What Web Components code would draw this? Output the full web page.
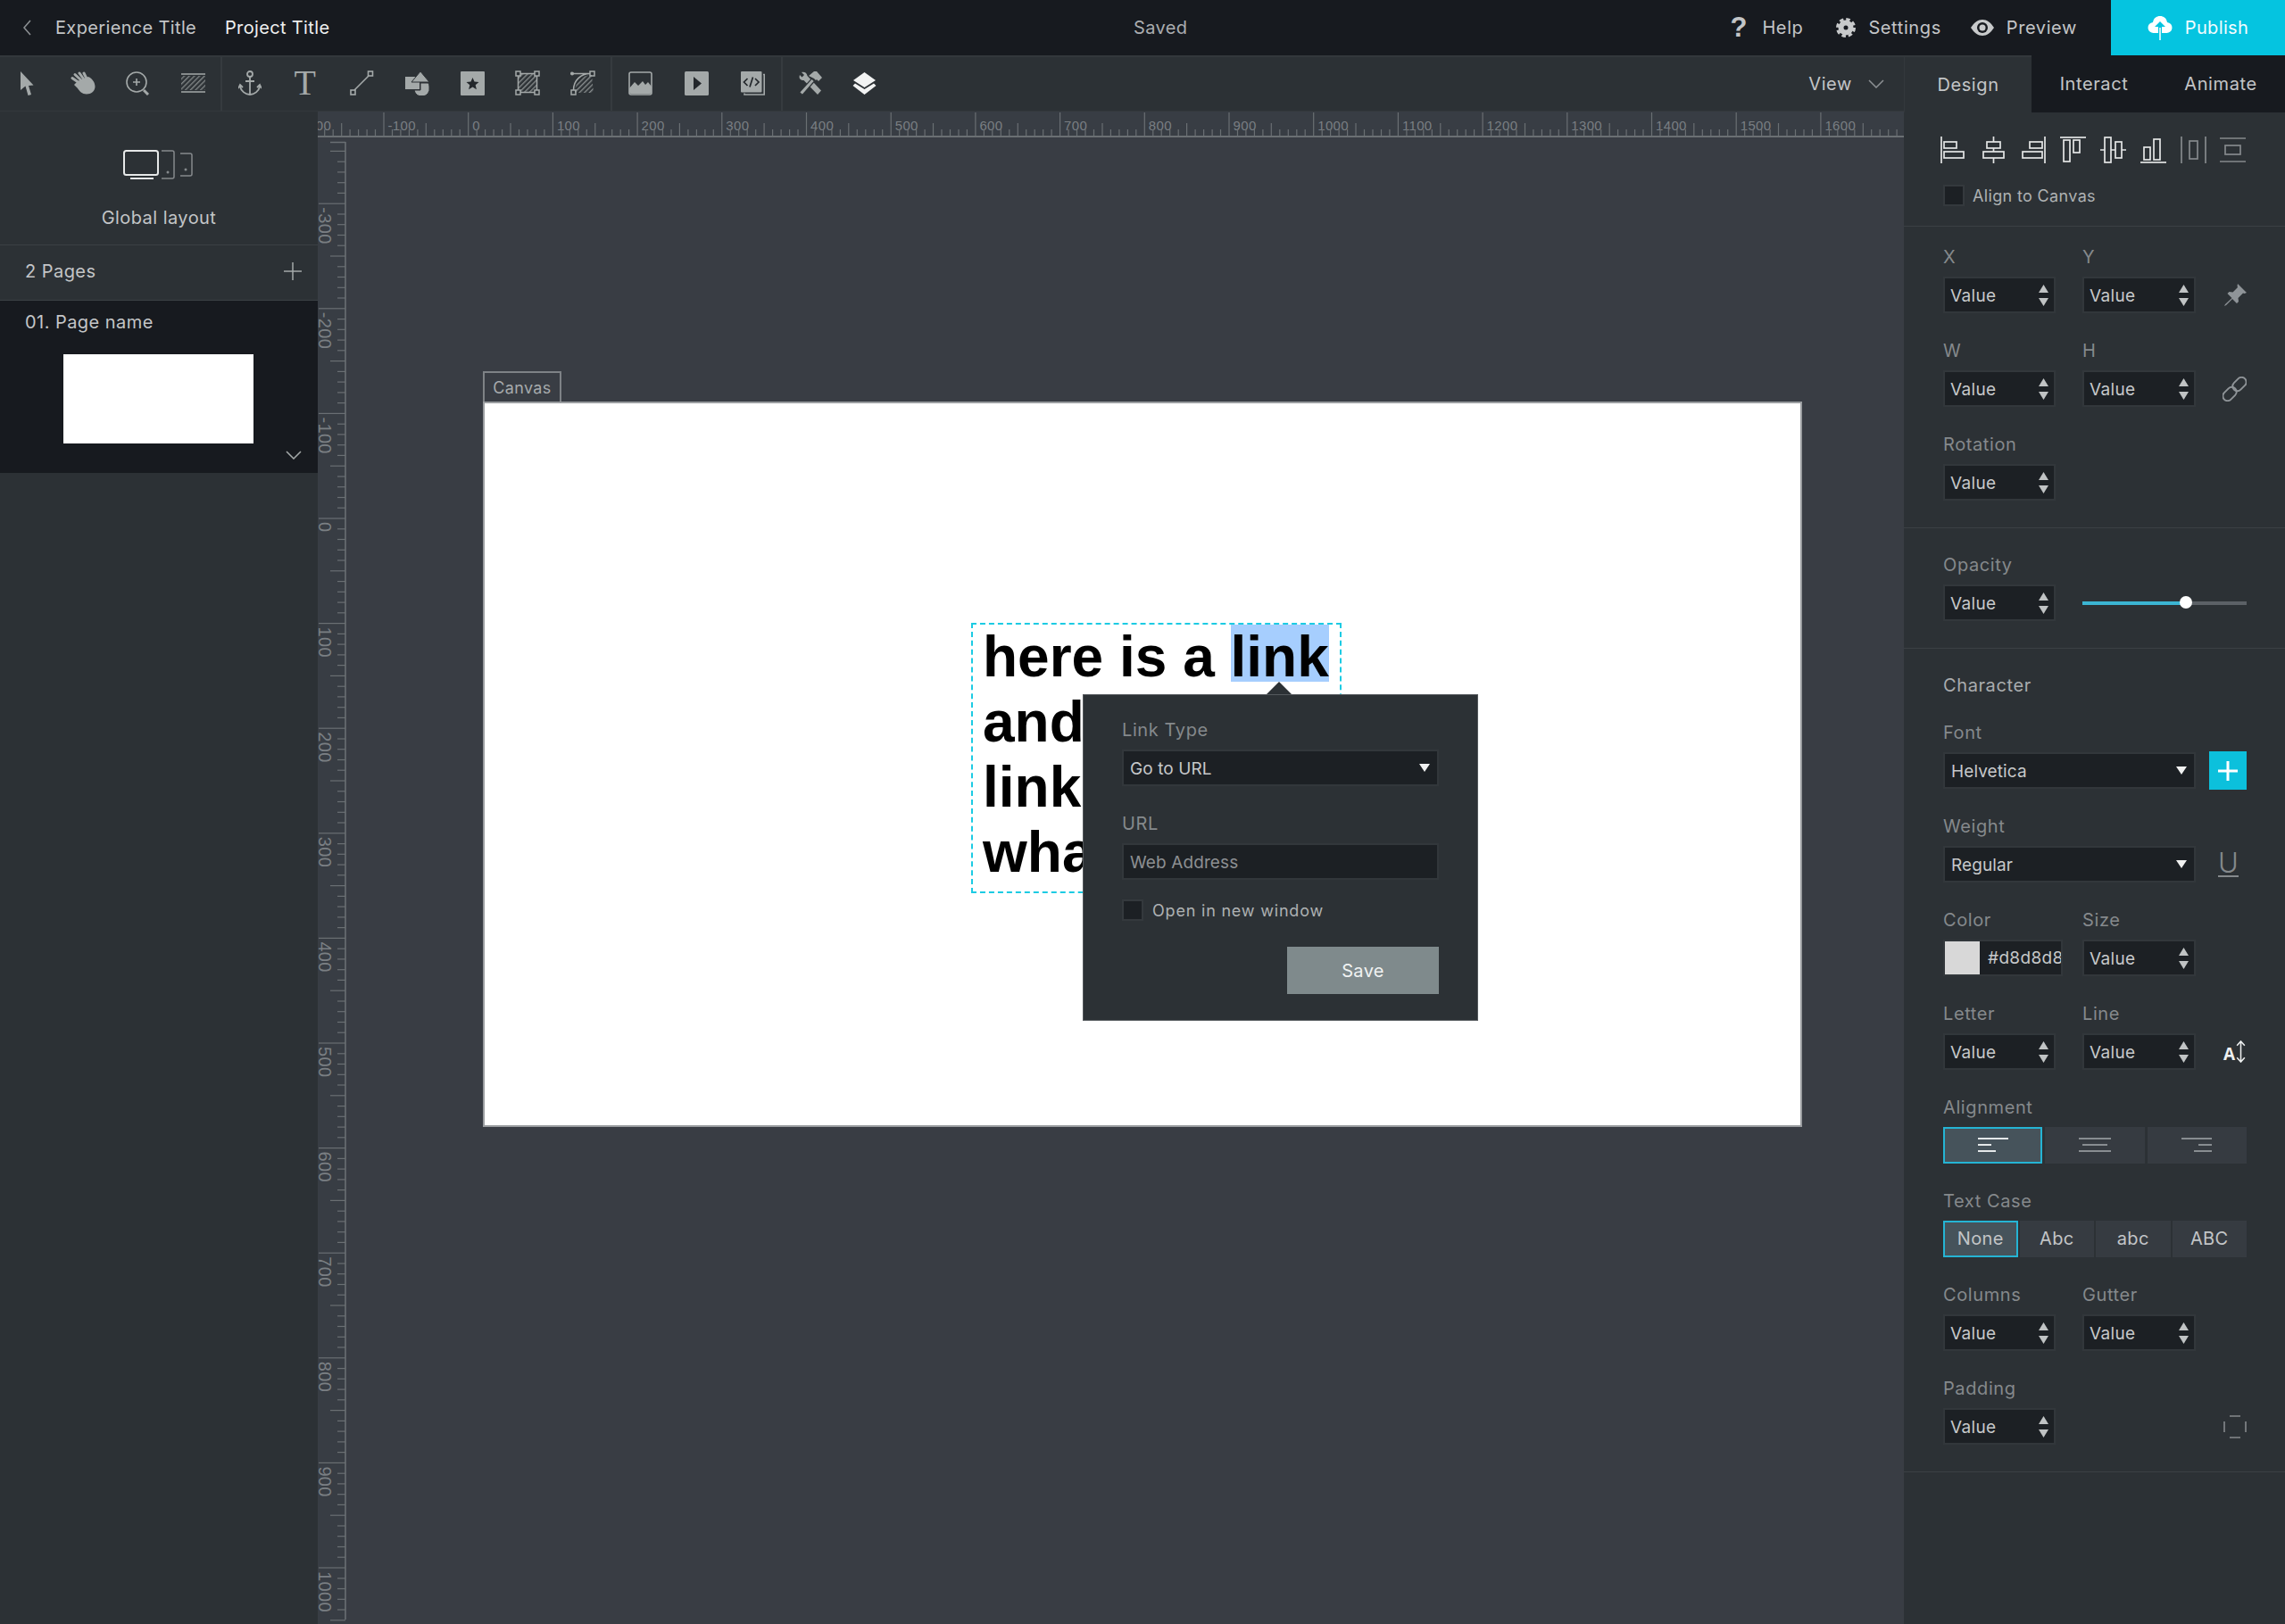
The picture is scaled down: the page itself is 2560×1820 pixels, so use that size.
<!DOCTYPE html>
<html>
<head>
<meta charset="utf-8">
<title>Editor</title>
<style>
	html, body { margin: 0; padding: 0; background: #393d44; }
	body { font-family: Inter, "Open Sans", sans-serif; font-size: 20px; letter-spacing: .35px; }
</style>
</head>
<body>
<app-shell>
	<top-bar slot="top"></top-bar>
	<tool-bar slot="tools"></tool-bar>
	<side-bar slot="side"></side-bar>
	<work-stage slot="stage">
		<canvas-sheet>
			<text-box></text-box>
			<link-popup></link-popup>
		</canvas-sheet>
	</work-stage>
	<prop-panel slot="props"></prop-panel>
</app-shell>

<script>
function tpl(html) {
	const t = document.createElement("template");
	t.innerHTML = html;
	return t;
}

class Base extends HTMLElement {
	constructor() {
		super();
		this.attachShadow({mode: "open"});
		this.shadowRoot.appendChild(this.constructor.template.content.cloneNode(true));
	}
}

const GREY = "#a4a9a9";

const hatch = `<defs><pattern id="hx" width="4" height="4" patternUnits="userSpaceOnUse" patternTransform="rotate(45)"><rect width="1.4" height="4" fill="${GREY}"/></pattern></defs>`;

const toolIcons = {
	arrow: `<svg width="15" height="27" viewBox="0 0 15 27"><path fill="${GREY}" d="M0 0 14.5 15.5 9 16 12 26 8.5 27 5.5 16.5 0 21Z"/></svg>`,
	hand: `<svg width="28" height="26" viewBox="0 0 28 26"><g stroke="${GREY}" stroke-width="3" stroke-linecap="round"><path d="M10 13 2 7.500"/><path d="M12 10 5 3.500"/><path d="M15 9 10 2"/><path d="M18 8 15 2"/></g><path fill="${GREY}" d="M8 11 20 6C24 8 27.500 12 27.500 17 27.500 22 23 25.500 18 25.500 13 25.500 10 22 8 19L4 15Z"/></svg>`,
	zoom: `<svg width="27" height="27" viewBox="0 0 27 27" fill="none" stroke="${GREY}"><circle cx="12" cy="12" r="11" stroke-width="1.6"/><path d="M12 8v8M8 12h8" stroke-width="1.6"/><path d="M20 21l5 5" stroke-width="3"/></svg>`,
	hatchbar: `<svg width="27" height="22" viewBox="0 0 27 22">${hatch}<rect y="3" width="27" height="16" fill="url(#hx)" opacity=".7"/><path d="M0 1h27M0 21h27" stroke="${GREY}" stroke-width="1.6"/></svg>`,
	anchor: `<svg width="26" height="28" viewBox="0 0 26 28" fill="none" stroke="${GREY}" stroke-width="1.8"><circle cx="13" cy="4" r="3"/><path d="M13 7v20M8 12h10"/><path d="M2 18c1 5 6 9 11 9s10-4 11-9"/><path d="M0 20l2-4 3 3M26 20l-2-4-3 3"/></svg>`,
	line: `<svg width="27" height="28" viewBox="0 0 27 28" fill="none" stroke="${GREY}" stroke-width="1.6"><rect x="20.5" y="1" width="5" height="5"/><rect x="1" y="22" width="5" height="5"/><path d="M5 22 21 6"/></svg>`,
	shapes: `<svg width="27" height="27" viewBox="0 0 27 27" fill="${GREY}"><rect y="6" width="16" height="14"/><path d="M17 0 27 12H7Z" stroke="#2c3135" stroke-width="1"/><path d="M10 21h7v-8h9c1 2 1 4 1 5a8.500 8.500 0 0 1-17 3Z" stroke="#2c3135" stroke-width="1"/></svg>`,
	star: `<svg width="27" height="27" viewBox="0 0 27 27"><rect width="27" height="27" rx="1" fill="${GREY}"/><path fill="#23272b" d="M13.500 7l2 4.600 5 .4-3.800 3.300 1.200 4.900-4.400-2.600-4.400 2.600 1.200-4.900L6.500 12l5-.4Z"/></svg>`,
	frame: `<svg width="28" height="28" viewBox="0 0 28 28">${hatch}<rect x="4" y="4" width="20" height="20" fill="url(#hx)" opacity=".75"/><g fill="#2c3135" stroke="${GREY}" stroke-width="1.5"><path d="M3.500 3.500h21v21h-21Z" fill="none"/><rect x="1" y="1" width="5" height="5"/><rect x="22" y="1" width="5" height="5"/><rect x="1" y="22" width="5" height="5"/><rect x="22" y="22" width="5" height="5"/></g></svg>`,
	curve: `<svg width="28" height="28" viewBox="0 0 28 28">${hatch}<path d="M5 24C5 13 13 5 24 5L26 25H5Z" fill="url(#hx)" opacity=".75"/><g fill="none" stroke="${GREY}" stroke-width="1.5"><path d="M3.500 22C3.500 11 12 3.500 22 3.500H3"/><rect x="1" y="22" width="5" height="5"/><rect x="22" y="1" width="5" height="5"/><circle cx="2" cy="3.500" r="1.300" fill="${GREY}"/></g></svg>`,
	image: `<svg width="27" height="27" viewBox="0 0 27 27"><rect x="1" y="1" width="25" height="25" rx="2" fill="none" stroke="${GREY}" stroke-width="1.6"/><path fill="${GREY}" d="M1 19 7 12l4 4 5-5 3 4 3-3 4 5v6a2 2 0 0 1-2 2H3a2 2 0 0 1-2-2Z"/></svg>`,
	play: `<svg width="27" height="27" viewBox="0 0 27 27"><rect width="27" height="27" rx="1.500" fill="${GREY}"/><path fill="#23272b" d="M10 6 19 13.500 10 21Z"/></svg>`,
	code: `<svg width="27" height="27" viewBox="0 0 27 27"><path d="M25 3.500h1.200V26H4v-1.500" fill="none" stroke="${GREY}" stroke-width="1.600"/><rect width="23.500" height="23.500" rx="1" fill="${GREY}"/><path d="M7.500 8 3.500 12l4 4M16 8l4 4-4 4M13.500 6.500 10 17.500" fill="none" stroke="#23272b" stroke-width="1.700"/></svg>`,
	tools: `<svg width="28" height="27" viewBox="0 0 28 27" fill="${GREY}"><path d="M2 4 4.500 6.500 7 4 4 1C7 0 10 1.500 10.500 5L26 21.500 22 26 6.500 10C3 10 .5 8 2 4Z"/><path d="M15.500 8 18.500 11 5 26.500 1.500 23.500Z" stroke="#2c3135" stroke-width="1.200"/><path d="M12 5 18 0h3l6 7-4 4-2-2-1 1-2-2Z"/></svg>`,
	layers: `<svg width="27" height="25" viewBox="0 0 27 25" fill="#f2f3f3"><path d="M13.500 0 26 9 13.500 17 1 9Z"/><path d="M3 12.500 13.500 19 24 12.500 26.500 15 13.500 25 .5 15Z"/></svg>`
};

class AppShell extends Base {
	static template = tpl(`
		<style>
			:host { display: grid; grid-template-columns: 2133px 427px; grid-template-rows: 62px 1fr; width: 2560px; height: 1820px; overflow: hidden; }
			#top { grid-column: 1 / 3; }
			#main { display: flex; flex-direction: column; min-width: 0; }
			#work { flex: 1; display: flex; min-height: 0; }
		</style>
		<div id="top"><slot name="top"></slot></div>
		<div id="main">
			<slot name="tools"></slot>
			<div id="work"><slot name="side"></slot><slot name="stage"></slot></div>
		</div>
		<slot name="props"></slot>
	`);
}

class TopBar extends Base {
	static template = tpl(`
		<style>
			:host { display: flex; align-items: center; height: 62px; background: #171a1f; color: #c3c5c7; position: relative; }
			.chev { margin-left: 24px; width: 24px; }
			.t1 { margin-left: 14px; width: 190px; }
			.t2 { color: #eeefef; }
			.saved { position: absolute; left: 1270px; color: #aaadaf; }
			.right { margin-left: auto; display: flex; align-items: center; height: 100%; }
			.act { display: flex; align-items: center; letter-spacing: .6px; }
			.pub { width: 195px; height: 100%; margin-left: 38px; background: #05c4e0; color: #f2fcfe; display: flex; align-items: center; justify-content: center; gap: 14px; }
			.q { font: 700 31px "Liberation Sans", sans-serif; width: 17px; color: #c3c5c7; }
		</style>
		<svg class="chev" width="10" height="20" viewBox="0 0 24 20" fill="none" stroke="#8d9194" stroke-width="1.500"><path d="M10 2 3 10l7 8"/></svg>
		<span class="t1">Experience Title</span>
		<span class="t2">Project Title</span>
		<span class="saved">Saved</span>
		<div class="right">
			<div class="act"><span class="q">?</span><span style="margin-left:19px">Help</span></div>
			<div class="act" style="margin-left:37px">
				<svg width="22" height="24" viewBox="0 0 22 24"><g transform="translate(11 12)"><circle r="5.500" fill="none" stroke="#c8cacb" stroke-width="6"/><circle r="9.500" fill="none" stroke="#c8cacb" stroke-width="3" stroke-dasharray="4.500 2.960"/></g></svg>
				<span style="margin-left:14px">Settings</span>
			</div>
			<div class="act" style="margin-left:33px">
				<svg width="26" height="18" viewBox="0 0 26 18"><path fill="#c8cacb" d="M0 9C4 3 8 0 13 0s9 3 13 9c-4 6-8 9-13 9S4 15 0 9Z"/><circle cx="13" cy="9" r="6" fill="#171a1f"/><circle cx="13" cy="9" r="3.500" fill="#c8cacb"/></svg>
				<span style="margin-left:14px">Preview</span>
			</div>
			<div class="pub">
				<svg width="28" height="27" viewBox="0 0 28 27"><path fill="#fff" d="M7 19a6 6 0 0 1-1-12C7 2 10 0 14 0s7 2 8 7a6 6 0 0 1-1 12Z"/><path fill="#05c4e0" d="M14 6l6 6h-4v7h-4v-7H8Z"/><path d="M14 13v14" stroke="#fff" stroke-width="1.500"/></svg>
				<span>Publish</span>
			</div>
		</div>
	`);
}

class ToolBar extends Base {
	static template = tpl(`
		<style>
			:host { display: flex; align-items: stretch; height: 63px; box-sizing: border-box; background: #2c3135; border-top: 2px solid #33383c; border-bottom: 1px solid #33383c; color: #c3c5c7; }
			.grp { display: flex; border-right: 2px solid #363b3f; box-sizing: border-box; }
			.ic { display: flex; align-items: center; justify-content: center; flex: 1; padding-bottom: 2px; }
			.T { font: 40px/1 "Liberation Serif", serif; color: ${GREY}; letter-spacing: 0; padding-right: 2px; }
			.view { margin-left: auto; display: flex; align-items: center; padding-right: 22px; gap: 18px; letter-spacing: .6px; }
		</style>
		<div class="grp" style="width:249px"><span class="ic">${toolIcons.arrow}</span><span class="ic">${toolIcons.hand}</span><span class="ic">${toolIcons.zoom}</span><span class="ic">${toolIcons.hatchbar}</span></div>
		<div class="grp" style="width:437px"><span class="ic">${toolIcons.anchor}</span><span class="ic T">T</span><span class="ic">${toolIcons.line}</span><span class="ic">${toolIcons.shapes}</span><span class="ic">${toolIcons.star}</span><span class="ic">${toolIcons.frame}</span><span class="ic">${toolIcons.curve}</span></div>
		<div class="grp" style="width:191px"><span class="ic">${toolIcons.image}</span><span class="ic">${toolIcons.play}</span><span class="ic">${toolIcons.code}</span></div>
		<div style="width:122px;display:flex"><span class="ic">${toolIcons.tools}</span><span class="ic">${toolIcons.layers}</span></div>
		<div class="view"><span>View</span><svg width="18" height="10" viewBox="0 0 18 10" fill="none" stroke="#8d9194" stroke-width="1.500"><path d="M1 1l8 8 8-8"/></svg></div>
	`);
}

class SideBar extends Base {
	static template = tpl(`
		<style>
			:host { display: block; width: 356px; flex: none; background: #2c3135; color: #c3c5c7; letter-spacing: .45px; position: relative; z-index: 1; }
			.global { height: 150px; box-sizing: border-box; border-bottom: 1px solid #3b4044; display: flex; flex-direction: column; align-items: center; padding-top: 43px; }
			.global span { margin-top: 30px; line-height: 24px; }
			.pages { height: 62px; box-sizing: border-box; border-bottom: 1px solid #3b4044; display: flex; align-items: center; justify-content: space-between; padding: 0 18px 3px 28px; }
			.page { height: 193px; background: #171a1f; position: relative; padding: 12px 0 0 28px; box-sizing: border-box; }
			.page .thumb { width: 213px; height: 100px; background: #fff; margin: 24px 0 0 43px; }
			.page svg { position: absolute; right: 18px; top: 168px; }
		</style>
		<div class="global">
			<svg width="80" height="34" viewBox="0 0 80 34" fill="none">
				<rect x="1" y="1" width="38" height="27" rx="2.500" stroke="#e6e8e8" stroke-width="2"/>
				<path d="M8 32h26" stroke="#e6e8e8" stroke-width="2"/>
				<path d="M43 1h12a2 2 0 0 1 2 2v27a2 2 0 0 1-2 2H43" stroke="#85898c" stroke-width="1.500"/>
				<circle cx="50" cy="25" r="1.500" fill="#85898c"/>
				<path d="M64 4h11a2 2 0 0 1 2 2v21a2 2 0 0 1-2 2H64" stroke="#85898c" stroke-width="1.500"/>
				<circle cx="70" cy="22" r="1.500" fill="#85898c"/>
			</svg>
			<span>Global layout</span>
		</div>
		<div class="pages"><span>2 Pages</span><svg width="20" height="20" viewBox="0 0 20 20" stroke="#a4a9a9" stroke-width="1.500"><path d="M10 0v20M0 10h20"/></svg></div>
		<div class="page">
			<span>01. Page name</span>
			<div class="thumb"></div>
			<svg width="18" height="10" viewBox="0 0 18 10" fill="none" stroke="#a4a9a9" stroke-width="1.500"><path d="M1 1l8 8 8-8"/></svg>
		</div>
	`);
}

class HRuler extends Base {
	static template = tpl(`
		<style>
			:host { display: block; height: 29px; background: #383d44; overflow: hidden; }
			svg { display: block; }
		</style>
		<svg width="1777" height="29"></svg>
	`);
	connectedCallback() {
		const origin = 168.7, step = 0.947;
		let s = `<path d="M0 28H1777" stroke="#6a6f73" stroke-width="2"/>`;
		for (let v = -200; v <= 1690; v += 10) {
			const x = (origin + v * step).toFixed(1);
			if (v % 100 === 0) {
				s += `<path d="M${x} 1V28" stroke="#6a6f73" stroke-width="1.200"/><text x="${+x + 4.5}" y="21" font-family="Liberation Sans" font-size="15" fill="#7a7f83">${v}</text>`;
			} else {
				const h = v % 50 === 0 ? 14 : 7;
				s += `<path d="M${x} ${27 - h}V27" stroke="#6a6f73" stroke-width="1.200"/>`;
			}
		}
		this.shadowRoot.querySelector("svg").innerHTML = s;
	}
}

class VRuler extends Base {
	static template = tpl(`
		<style>
			:host { display: block; width: 32px; height: 100%; background: #383d44; margin-top: 5px; }
			svg { display: block; overflow: visible; }
		</style>
		<svg width="32" height="1656"></svg>
	`);
	connectedCallback() {
		const origin = 422, step = 1.176;
		let s = `<path d="M31 0V1656M14 .5H31" stroke="#6a6f73" stroke-width="1.600"/>`;
		for (let v = -350; v <= 1050; v += 10) {
			const y = (origin + v * step).toFixed(1);
			if (y < 6) continue;
			if (v % 100 === 0) {
				s += `<path d="M1 ${y}H31" stroke="#6a6f73" stroke-width="1.200"/><text transform="translate(1 ${+y + 4}) rotate(90)" font-family="Liberation Sans" font-size="20" fill="#7a7f83">${v}</text>`;
			} else {
				const w = v % 50 === 0 ? 17 : 9;
				s += `<path d="M${31 - w} ${y}H31" stroke="#6a6f73" stroke-width="1.200"/>`;
			}
		}
		this.shadowRoot.querySelector("svg").innerHTML = s;
	}
}

class WorkStage extends Base {
	static template = tpl(`
		<style>
			:host { display: flex; flex-direction: column; flex: 1; min-width: 0; background: #393d44; position: relative; }
			#body { flex: 1; min-height: 0; }
		</style>
		<h-ruler></h-ruler>
		<div id="body"><v-ruler></v-ruler></div>
		<slot></slot>
	`);
}

class CanvasSheet extends Base {
	static template = tpl(`
		<style>
			:host { position: absolute; left: 185px; top: 325px; width: 1478px; height: 813px; box-sizing: border-box; background: #fff; border: 2px solid #9a9da0; display: block; }
			.tab { position: absolute; left: -2px; top: -36px; width: 88px; height: 34px; box-sizing: border-box; border: 2px solid #7e8286; border-bottom: 0; color: #a6aaac; font-size: 18px; display: flex; align-items: center; justify-content: center; }
		</style>
		<div class="tab">Canvas</div>
		<slot></slot>
	`);
}

class TextBox extends Base {
	static template = tpl(`
		<style>
			:host { position: absolute; left: 545px; top: 246px; width: 415px; height: 303px; box-sizing: border-box; border: 2px dashed #1ccbe3; padding-left: 11px; font: 700 64px/73px "Liberation Sans", sans-serif; letter-spacing: 0; color: #000; white-space: nowrap; }
			mark { color: inherit; background: linear-gradient(#a6cefe, #a6cefe) no-repeat 0 0 / 100% 64px; }
		</style>
		here is a <mark>link</mark><br>and<br>link<br>what
	`);
}

class SelField extends Base {
	static template = tpl(`
		<style>
			:host { display: flex; align-items: center; height: 41px; box-sizing: border-box; background: #1c2024; border: 2px solid #32373b; color: #c6c8ca; padding: 2px 8px 0 7px; font-size: 19px; letter-spacing: .1px; }
			svg { margin-left: auto; margin-top: -2px; }
		</style>
		<slot></slot>
		<svg width="12" height="9" viewBox="0 0 12 9"><path fill="#f0f1f1" d="M0 0h12L6 9Z"/></svg>
	`);
}

class NumField extends Base {
	static template = tpl(`
		<style>
			:host { display: flex; align-items: center; height: 41px; box-sizing: border-box; background: #1c2024; border: 2px solid #32373b; color: #c6c8ca; padding: 2px 6px 0 6px; font-size: 19px; letter-spacing: .35px; }
			svg { margin-left: auto; margin-top: -2px; }
		</style>
		<slot>Value</slot>
		<svg width="11" height="24" viewBox="0 0 11 24" fill="#c0c3c4"><path d="M5.500 0 11 9H0Z"/><path d="M0 15h11L5.500 24Z"/></svg>
	`);
}

class FieldLabel extends Base {
	static template = tpl(`
		<style>
			:host { display: block; height: 22px; line-height: 22px; color: #85898c; white-space: nowrap; letter-spacing: .6px; }
		</style>
		<slot></slot>
	`);
}

class CheckItem extends Base {
	static template = tpl(`
		<style>
			:host { display: flex; align-items: center; gap: 10px; color: #aeb1b3; font-size: 18px; height: 24px; }
			i { width: 24px; height: 24px; box-sizing: border-box; background: #1c2024; border: 2px solid #34393d; display: block; }
		</style>
		<i></i><slot></slot>
	`);
}

class LinkPopup extends Base {
	static template = tpl(`
		<style>
			:host { position: absolute; left: 670px; top: 326px; width: 443px; height: 366px; box-sizing: border-box; background: #2c3135; border: 1px solid #55595d; padding: 28px 43px 0 43px; display: block; }
			.tip { position: absolute; left: 205px; top: -15px; width: 28px; height: 14px; background: #2c3135; clip-path: polygon(50% 0, 100% 100%, 0 100%); }
			field-label { margin-bottom: 11px; }
			sel-field { margin-bottom: 31px; }
			check-item { margin-top: 22px; letter-spacing: .8px; }
			.save { width: 170px; height: 53px; margin: 29px 0 0 auto; background: #7f8a8c; color: #f0f2f2; display: flex; align-items: center; justify-content: center; }
			.url { height: 41px; box-sizing: border-box; background: #1c2024; border: 2px solid #32373b; color: #8c8f92; padding: 2px 0 0 7px; display: flex; align-items: center; font-size: 19px; letter-spacing: .1px; }
		</style>
		<div class="tip"></div>
		<field-label>Link Type</field-label>
		<sel-field>Go to URL</sel-field>
		<field-label>URL</field-label>
		<div class="url">Web Address</div>
		<check-item>Open in new window</check-item>
		<div class="save">Save</div>
	`);
}

class SegGroup extends Base {
	static template = tpl(`
		<style>
			:host { display: grid; grid-auto-flow: column; grid-auto-columns: 1fr; height: 41px; gap: var(--gap, 3px); }
			::slotted(*) { box-sizing: border-box; background: #363b41; color: #c3c5c7; display: flex; align-items: center; justify-content: center; padding-bottom: 2px; }
			::slotted(.on) { background: #46535b; border: 2px solid #25b4d4; }
		</style>
		<slot></slot>
	`);
}

class PropPanel extends Base {
	static template = tpl(`
		<style>
			:host { display: block; background: #2c3135; color: #c3c5c7; }
			.tabs { display: flex; height: 64px; background: #171a1f; box-sizing: border-box; }
			.tabs span { display: flex; align-items: center; justify-content: center; height: 100%; letter-spacing: .6px; }
			.tabs .on { width: 143px; background: #2c3135; border-left: 1px solid #33383c; box-sizing: border-box; border-top: 2px solid #33383c; }
			.aligns { display: flex; padding: 27px 0 0 33px; height: 30px; color: #e4e6e6; }
			.aligns span { width: 44.800px; display: flex; justify-content: center; }
			.aligns svg { fill: none; stroke: currentColor; stroke-width: 1.700; }
			.aligns .dim { color: #85898c; }
			.sec { border-bottom: 1px solid #3b4044; padding: 30px 0 30px 44px; }
			.sec.first { padding: 0 0 22px 44px; margin-top: 24px; }
			.sec.first check-item { gap: 9px; }
			.sec.top { padding-top: 23px; }
			.row { display: grid; grid-template-columns: 126px 127px 27px; column-gap: 30px; margin-bottom: 31px; align-items: end; }
			.row:last-child { margin-bottom: 0; }
			.f { display: flex; flex-direction: column; gap: 11px; }
			.wide { grid-column: 1 / 3; }
			.all { grid-column: 1 / 4; }
			.ic { height: 41px; display: flex; align-items: center; justify-content: center; }
			.plus { width: 42px; height: 43px; background: #0cc0dc; margin-left: -15px; margin-bottom: -1px; display: flex; align-items: center; justify-content: center; }
			.u { font-weight: 300; font-size: 31px; line-height: 26px; color: #85898c; border-bottom: 2px solid #85898c; letter-spacing: 0; height: 27px; font-family: Inter, sans-serif; margin-right: 14px; }
			.a { display: flex; align-items: flex-end; gap: 1px; color: #eef0f0; font: 700 19px/1 "Open Sans", sans-serif; letter-spacing: 0; box-sizing: border-box; padding-bottom: 8px; }
			.color { display: flex; width: 134px; height: 41px; box-sizing: border-box; background: #1c2024; border: 2px solid #32373b; color: #c6c8ca; overflow: hidden; align-items: center; font-size: 19px; }
			.color i { width: 39px; height: 100%; background: #d8d8d8; flex: none; margin-right: 9px; }
			.title { color: #a9acae; }
			.slider { grid-column: 2 / 4; height: 41px; display: flex; align-items: center; position: relative; }
			.slider b { height: 4px; display: block; width: 116px; background: #3bb5d3; }
			.slider em { height: 4px; display: block; flex: 1; background: #5c6166; }
			.slider u { position: absolute; left: 109px; top: 13px; width: 14px; height: 14px; border-radius: 50%; background: #fff; }
			.lines { display: block; }
		</style>
		<div class="tabs">
			<span class="on">Design</span>
			<span style="width:140px">Interact</span>
			<span style="width:144px">Animate</span>
		</div>
		<div class="aligns">
			<span><svg width="29" height="30" viewBox="0 0 29 30"><path d="M1 0v30"/><rect x="4" y="6" width="14" height="7"/><rect x="4" y="17" width="22" height="7"/></svg></span>
			<span><svg width="29" height="30" viewBox="0 0 29 30"><path d="M14.500 0v6M14.500 13v4M14.500 24v6"/><rect x="7" y="6" width="15" height="7"/><rect x="3" y="17" width="23" height="7"/></svg></span>
			<span><svg width="29" height="30" viewBox="0 0 29 30"><path d="M28 0v30"/><rect x="11" y="6" width="14" height="7"/><rect x="3" y="17" width="22" height="7"/></svg></span>
			<span><svg width="29" height="30" viewBox="0 0 29 30"><path d="M0 1h29"/><rect x="4" y="4" width="7" height="24"/><rect x="15" y="4" width="7" height="14"/></svg></span>
			<span><svg width="29" height="30" viewBox="0 0 29 30"><path d="M0 15h5M12 15h5M24 15h5"/><rect x="5" y="1" width="7" height="28"/><rect x="17" y="6" width="7" height="18"/></svg></span>
			<span><svg width="29" height="30" viewBox="0 0 29 30"><path d="M0 29h29"/><rect x="4" y="12" width="7" height="14"/><rect x="15" y="3" width="7" height="23"/></svg></span>
			<span class="dim"><svg width="29" height="30" viewBox="0 0 29 30"><path d="M1 0v30M28 0v30"/><rect x="10" y="5" width="9" height="20"/></svg></span>
			<span class="dim"><svg width="29" height="30" viewBox="0 0 29 30"><path d="M0 2h29M0 28h29"/><rect x="6" y="10" width="17" height="10"/></svg></span>
		</div>
		<div class="sec first"><check-item>Align to Canvas</check-item></div>

		<div class="sec top">
			<div class="row">
				<div class="f"><field-label>X</field-label><num-field></num-field></div>
				<div class="f"><field-label>Y</field-label><num-field></num-field></div>
				<div class="ic"><svg width="26" height="26" viewBox="0 0 26 26"><path fill="#8f9498" d="M16 0l10 10-2.500 1-1.500-.5-5.500 5.500.5 4-2 2-5-5L3 24l-2 1 1-2 7.500-7-5-5 2-2 4 .5L16 4l-.5-1.500Z"/></svg></div>
			</div>
			<div class="row">
				<div class="f"><field-label>W</field-label><num-field></num-field></div>
				<div class="f"><field-label>H</field-label><num-field></num-field></div>
				<div class="ic"><svg width="28" height="28" viewBox="0 0 28 28" fill="none" stroke="#8f9498" stroke-width="2"><g transform="rotate(-45 14 14)"><rect x="-3" y="8.500" width="18" height="11" rx="5.500"/><rect x="13" y="8.500" width="18" height="11" rx="5.500"/></g></svg></div>
			</div>
			<div class="row">
				<div class="f"><field-label>Rotation</field-label><num-field></num-field></div>
			</div>
		</div>

		<div class="sec">
			<div class="row">
				<div class="f"><field-label>Opacity</field-label><num-field></num-field></div>
				<div class="slider"><b></b><em></em><u></u></div>
			</div>
		</div>

		<div class="sec">
			<div class="row"><field-label class="all title">Character</field-label></div>
			<div class="row">
				<div class="f wide"><field-label>Font</field-label><sel-field>Helvetica</sel-field></div>
				<div class="plus"><svg width="22" height="22" viewBox="0 0 22 22" stroke="#fff" stroke-width="3"><path d="M11 0v22M0 11h22"/></svg></div>
			</div>
			<div class="row">
				<div class="f wide"><field-label>Weight</field-label><sel-field>Regular</sel-field></div>
				<div class="ic"><span class="u">U</span></div>
			</div>
			<div class="row">
				<div class="f"><field-label>Color</field-label><div class="color"><i></i><span>#d8d8d8</span></div></div>
				<div class="f"><field-label>Size</field-label><num-field></num-field></div>
			</div>
			<div class="row">
				<div class="f"><field-label>Letter</field-label><num-field></num-field></div>
				<div class="f"><field-label>Line</field-label><num-field></num-field></div>
				<div class="ic a"><span>A</span><svg width="11" height="25" viewBox="0 0 11 26" fill="none" stroke="#eef0f0" stroke-width="1.600"><path d="M5.500 1v24M1 6l4.500-5L10 6M1 20l4.500 5L10 20"/></svg></div>
			</div>
			<div class="row">
				<div class="f all"><field-label>Alignment</field-label>
					<seg-group>
						<div class="on"><svg class="lines" width="34" height="18" viewBox="0 0 34 18" stroke="#e4e8e9" stroke-width="2"><path d="M0 2h34M0 9h15M0 16h20"/></svg></div>
						<div><svg class="lines" width="36" height="18" viewBox="0 0 36 18" stroke="#888d91" stroke-width="2"><path d="M0 2h36M4 9h28M0 16h36"/></svg></div>
						<div><svg class="lines" width="34" height="18" viewBox="0 0 34 18" stroke="#888d91" stroke-width="2"><path d="M0 2h34M19 9h15M14 16h20"/></svg></div>
					</seg-group>
				</div>
			</div>
			<div class="row">
				<div class="f all"><field-label>Text Case</field-label>
					<seg-group style="--gap:2px">
						<div class="on">None</div>
						<div>Abc</div>
						<div>abc</div>
						<div>ABC</div>
					</seg-group>
				</div>
			</div>
			<div class="row">
				<div class="f"><field-label>Columns</field-label><num-field></num-field></div>
				<div class="f"><field-label>Gutter</field-label><num-field></num-field></div>
			</div>
			<div class="row">
				<div class="f"><field-label>Padding</field-label><num-field></num-field></div>
				<div></div>
				<div class="ic"><svg width="26" height="26" viewBox="0 0 26 26" stroke="#85898c" stroke-width="1.600"><path d="M7 1h12M7 25h12M1 7v12M25 7v12"/></svg></div>
			</div>
		</div>
	`);
}

customElements.define("app-shell", AppShell);
customElements.define("top-bar", TopBar);
customElements.define("tool-bar", ToolBar);
customElements.define("side-bar", SideBar);
customElements.define("h-ruler", HRuler);
customElements.define("v-ruler", VRuler);
customElements.define("work-stage", WorkStage);
customElements.define("canvas-sheet", CanvasSheet);
customElements.define("text-box", TextBox);
customElements.define("sel-field", SelField);
customElements.define("num-field", NumField);
customElements.define("field-label", FieldLabel);
customElements.define("check-item", CheckItem);
customElements.define("link-popup", LinkPopup);
customElements.define("seg-group", SegGroup);
customElements.define("prop-panel", PropPanel);
</script>
</body>
</html>
